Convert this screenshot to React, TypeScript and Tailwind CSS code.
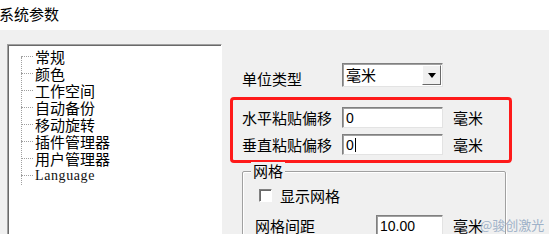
import React from "react";

const cjk = { fontFamily: '"Noto Sans CJK SC", "Noto Sans", sans-serif' };

const treeItems = ["常规", "颜色", "工作空间", "自动备份", "移动旋转", "插件管理器", "用户管理器"];

function SunkenInput({ value, width, caret }: { value: string; width: string; caret?: boolean }) {
  return (
    <div
      className={`${width} h-[21px] bg-white border border-t-[#808080] border-l-[#808080] border-r-[#e3e3e3] border-b-[#e3e3e3] shadow-[inset_1px_1px_0_#a0a0a0] flex items-center pl-[3px] text-[14px] leading-none text-black`}
      style={{ fontFamily: '"Liberation Sans", sans-serif' }}
    >
      {value}
      {caret && <span className="ml-[1px] w-px h-[14px] bg-black" />}
    </div>
  );
}

export default function App() {
  return (
    <div className="relative w-[549px] h-[234px] overflow-hidden bg-[#f0f0f0] text-black" style={cjk}>
      <div className="h-[30px] bg-white text-[15px] leading-[28px] -ml-[1px]">系统参数</div>

      <div className="flex">
        {/* tree panel */}
        <div className="ml-[7px] mt-[14px] w-[215px] h-[200px] bg-white border border-t-[#a0a0a0] border-l-[#a0a0a0] border-r-[#fff] border-b-[#fff] shadow-[inset_1px_1px_0_#696969]">
          <div className="relative pt-[3px]">
            <div className="absolute left-[13px] top-[12px] h-[128px] border-l border-dotted border-[#a0a0a0]" />
            {treeItems.map((t) => (
              <div key={t} className="flex items-center h-[17px]">
                <span className="ml-[13px] w-[12px] border-t border-dotted border-[#a0a0a0]" />
                <span className="ml-[2px] text-[15px] leading-[17px]">{t}</span>
              </div>
            ))}
            <div className="flex items-center h-[17px]">
              <span className="ml-[13px] w-[12px] border-t border-dotted border-[#a0a0a0]" />
              <span
                className="ml-[2px] text-[14px] leading-[17px] tracking-[0.6px] text-[#111]"
                style={{ fontFamily: '"Liberation Serif", serif' }}
              >
                Language
              </span>
            </div>
          </div>
        </div>

        {/* settings panel */}
        <div className="ml-[8px] flex flex-col">
          <div className="mt-[33px] flex items-center h-[24px]">
            <span className="pl-[12px] w-[112px] text-[15px] leading-none pt-[6px]">单位类型</span>
            <div className="w-[101px] h-[24px] flex bg-white border border-t-[#808080] border-l-[#808080] border-r-[#e3e3e3] border-b-[#e3e3e3] shadow-[inset_1px_1px_0_#a0a0a0]">
              <span className="flex-1 pl-[3px] text-[15px] leading-[22px]">毫米</span>
              <div className="w-[19px] h-[20px] mt-[1px] mr-[1px] bg-[#f0f0f0] border border-t-[#fff] border-l-[#fff] border-r-[#696969] border-b-[#696969] flex items-center justify-center">
                <svg width="8" height="5" viewBox="0 0 8 5">
                  <path d="M0 0H8L4 5Z" fill="#000" />
                </svg>
              </div>
            </div>
          </div>

          <div className="mt-[10px] w-[282px] h-[66px] border-[3px] border-[#fe1a1a] rounded-[4px] pt-[7px] flex flex-col gap-[6px]">
            {["水平粘贴偏移", "垂直粘贴偏移"].map((l, i) => (
              <div key={l} className="flex items-center">
                <span className="pl-[9px] w-[109px] text-[15px] leading-none">{l}</span>
                <SunkenInput value="0" width="w-[101px]" caret={i === 1} />
                <span className="ml-[10px] text-[15px] leading-none">毫米</span>
              </div>
            ))}
          </div>

          <div className="relative mt-[8px] ml-[12px] w-[264px] h-[90px] border border-[#a0a0a0] shadow-[inset_1px_1px_0_#fff,1px_1px_0_#fff] rounded-[2px]">
            <span className="absolute -top-[10px] left-[8px] px-[2px] bg-[#f0f0f0] text-[15px] leading-[18px]">网格</span>
            <div className="mt-[16px] ml-[16px] flex items-center">
              <span className="w-[13px] h-[13px] bg-white border border-t-[#808080] border-l-[#808080] border-r-[#fff] border-b-[#fff] shadow-[inset_1px_1px_0_#696969]" />
              <span className="ml-[8px] text-[15px] leading-none">显示网格</span>
            </div>
            <div className="mt-[12px] ml-[12px] flex items-center">
              <span className="w-[121px] text-[15px] leading-none">网格间距</span>
              <SunkenInput value="10.00" width="w-[67px]" />
              <span className="ml-[10px] text-[15px] leading-none">毫米</span>
            </div>
          </div>
        </div>
      </div>

      <span className="absolute left-[480px] top-[218px] text-[13px] leading-none text-[#9fb2c8]">@骏创激光</span>
    </div>
  );
}
